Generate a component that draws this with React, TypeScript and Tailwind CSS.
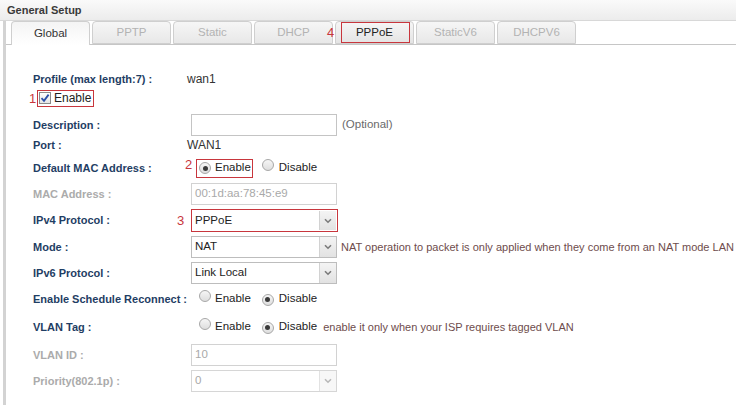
import React from "react";

const F = { fontFamily: '"Liberation Sans", Arial, sans-serif' };

function Radio({ checked }: { checked?: boolean }) {
  return (
    <span className="relative inline-flex h-[12px] w-[12px] shrink-0 items-center justify-center rounded-full border border-[#a7a7a7] bg-gradient-to-b from-[#f6f6f6] to-[#dedede]">
      {checked && <span className="h-[5px] w-[5px] rounded-full bg-[#3a3a3a]" />}
    </span>
  );
}

function Checkbox() {
  return (
    <span className="inline-flex h-[12px] w-[12px] shrink-0 items-center justify-center border border-[#8a8a8a] bg-gradient-to-b from-[#ffffff] to-[#e4e4e4]">
      <svg width="10" height="10" viewBox="0 0 10 10">
        <path d="M1.5 5.2 L4 7.8 L8.6 1.6" fill="none" stroke="#2b4fa8" strokeWidth="1.8" />
      </svg>
    </span>
  );
}

function Chevron({ light }: { light?: boolean }) {
  return (
    <svg width="8" height="6" viewBox="0 0 8 6">
      <path d="M1 1.2 L4 4.2 L7 1.2" fill="none" stroke={light ? "#b8b8b8" : "#7a7a7a"} strokeWidth="1.6" />
    </svg>
  );
}

function Select({ value, disabled }: { value: string; disabled?: boolean }) {
  return (
    <div
      className={`flex h-[22px] w-[146px] shrink-0 items-stretch border bg-white ${
        disabled ? "border-[#d6d6d6]" : "border-[#bdbdbd]"
      }`}
    >
      <div className={`flex flex-1 items-center pl-[3px] text-[11.5px] ${disabled ? "text-[#a8a8a8]" : "text-[#222]"}`}>
        {value}
      </div>
      <div
        className={`flex w-[17px] items-center justify-center border-l ${
          disabled ? "border-[#e2e2e2] bg-[#f7f7f7]" : "border-[#d2d2d2] bg-gradient-to-b from-[#f4f4f4] to-[#e2e2e2]"
        }`}
      >
        <Chevron light={disabled} />
      </div>
    </div>
  );
}

function Input({ value, disabled }: { value?: string; disabled?: boolean }) {
  return (
    <div
      className={`flex h-[22px] w-[146px] shrink-0 items-center border bg-white pl-[3px] text-[11.5px] ${
        disabled ? "border-[#d2d2d2] text-[#a9a9a9]" : "border-[#c4c4c4] text-[#222]"
      }`}
    >
      {value}
    </div>
  );
}

function Label({ children, disabled }: { children: React.ReactNode; disabled?: boolean }) {
  return (
    <div
      className={`w-[158px] shrink-0 whitespace-nowrap text-[11px] font-bold ${disabled ? "text-[#ababab]" : "text-[#1f3e64]"}`}
    >
      {children}
    </div>
  );
}

function Row({ h, mt, children }: { h: number; mt: number; children: React.ReactNode }) {
  return (
    <div className="flex items-center" style={{ height: h, marginTop: mt }}>
      {children}
    </div>
  );
}

const tabs = ["Global", "PPTP", "Static", "DHCP", "PPPoE", "StaticV6", "DHCPV6"];

export default function App() {
  return (
    <div className="relative h-[407px] w-[736px] overflow-hidden bg-white" style={F}>
      {/* header */}
      <div className="flex h-[21px] items-center border-b border-[#d8d8d8] bg-gradient-to-b from-[#fafafa] to-[#ececec] pl-[7px] text-[11px] font-bold text-[#3a3a3a]">
        General Setup
      </div>

      {/* panel */}
      <div className="ml-[3px] h-[384px] border-l-[3px] border-[#d3d3d3]">
        {/* tab strip */}
        <div className="relative flex h-[24px] items-end gap-[2px] border-b border-[#c6c6c6] pl-[5px]">
          {tabs.map((t, i) => {
            const active = i === 0;
            const marked = t === "PPPoE";
            return (
              <div
                key={t}
                className={`relative flex h-[23px] w-[79px] items-center justify-center rounded-t-[4px] border border-[#cfcfcf] text-[11.5px] ${
                  active
                    ? "mb-[-1px] h-[24px] border-b-0 bg-gradient-to-b from-[#f4f4f4] to-[#ffffff] text-[#333]"
                    : marked
                    ? "bg-gradient-to-b from-[#f6f6f6] to-[#e4e4e4] text-[#222]"
                    : "bg-gradient-to-b from-[#f6f6f6] to-[#e8e8e8] text-[#b3b3b3]"
                }`}
              >
                {marked && (
                  <span className="absolute left-[5px] right-[3px] top-[0px] bottom-[0px] border border-[#c8363d]" />
                )}
                <span className="relative">{t}</span>
              </div>
            );
          })}
          <span className="absolute left-[321px] text-[13px] leading-none text-[#c8363d]" style={{ top: 5 }}>
            4
          </span>
        </div>

        {/* form */}
        <div className="pl-[27px]">
          <Row h={20} mt={24}>
            <Label>Profile (max length:7) :</Label>
            <div className="ml-[-4px] text-[12px] text-[#333]">wan1</div>
          </Row>
          <Row h={18} mt={0}>
            <div className="ml-[-4px] flex items-center">
              <span className="w-[8px] text-[13px] leading-none text-[#c8363d]">1</span>
              <div className="flex h-[17px] items-center gap-[3px] border border-[#c8363d] pl-[1px] pr-[2px] text-[12px] text-[#222]">
                <Checkbox />
                <span>Enable</span>
              </div>
            </div>
          </Row>
          <Row h={22} mt={7}>
            <Label>Description :</Label>
            <Input />
            <span className="ml-[5px] text-[11.5px] text-[#6a6a6a]">(Optional)</span>
          </Row>
          <Row h={18} mt={0}>
            <Label>Port :</Label>
            <div className="ml-[-4px] text-[12px] text-[#333]">WAN1</div>
          </Row>
          <Row h={22} mt={3}>
            <Label>Default MAC Address :</Label>
            <div className="relative flex items-center text-[11.5px] text-[#222]">
              <span className="absolute left-[-6px] text-[13px] leading-none text-[#c8363d]" style={{ top: -1 }}>
                2
              </span>
              <div className="ml-[5px] flex h-[19px] items-center gap-[4px] border border-[#c8363d] pl-[2px] pr-[1px]">
                <Radio checked />
                <span>Enable</span>
              </div>
              <span className="ml-[9px]">
                <Radio />
              </span>
              <span className="ml-[5px]">Disable</span>
            </div>
          </Row>
          <Row h={22} mt={4}>
            <Label disabled>MAC Address :</Label>
            <Input value="00:1d:aa:78:45:e9" disabled />
          </Row>
          <Row h={23} mt={4}>
            <Label>IPv4 Protocol :</Label>
            <div className="relative">
              <span className="absolute left-[-14px] top-[5px] text-[13px] leading-none text-[#c8363d]">3</span>
              <div className="flex h-[23px] w-[147px] items-stretch border border-[#c8363d] bg-white">
                <div className="flex flex-1 items-center pl-[3px] text-[11.5px] text-[#222]">PPPoE</div>
                <div className="my-[1px] mr-[1px] flex w-[17px] items-center justify-center border-l border-[#d2d2d2] bg-gradient-to-b from-[#f4f4f4] to-[#e2e2e2]">
                  <Chevron />
                </div>
              </div>
            </div>
          </Row>
          <Row h={22} mt={4}>
            <Label>Mode :</Label>
            <Select value="NAT" />
            <span className="ml-[4px] whitespace-nowrap text-[11px] text-[#6e4c4c]">
              NAT operation to packet is only applied when they come from an NAT mode LAN
            </span>
          </Row>
          <Row h={22} mt={4}>
            <Label>IPv6 Protocol :</Label>
            <Select value="Link Local" />
          </Row>
          <Row h={20} mt={5}>
            <Label>Enable Schedule Reconnect :</Label>
            <div className="flex items-center text-[11.5px] text-[#222]">
              <span className="ml-[8px]">
                <Radio />
              </span>
              <span className="ml-[4px]">Enable</span>
              <span className="ml-[11px]">
                <Radio checked />
              </span>
              <span className="ml-[5px]">Disable</span>
            </div>
          </Row>
          <Row h={20} mt={8}>
            <Label>VLAN Tag :</Label>
            <div className="flex items-center whitespace-nowrap text-[11.5px] text-[#222]">
              <span className="ml-[8px]">
                <Radio />
              </span>
              <span className="ml-[4px]">Enable</span>
              <span className="ml-[11px]">
                <Radio checked />
              </span>
              <span className="ml-[5px]">Disable</span>
              <span className="ml-[6px] text-[11px] text-[#6e4c4c]">enable it only when your ISP requires tagged VLAN</span>
            </div>
          </Row>
          <Row h={22} mt={7}>
            <Label disabled>VLAN ID :</Label>
            <Input value="10" disabled />
          </Row>
          <Row h={22} mt={4}>
            <Label disabled>Priority(802.1p) :</Label>
            <Select value="0" disabled />
          </Row>
        </div>
      </div>
    </div>
  );
}
